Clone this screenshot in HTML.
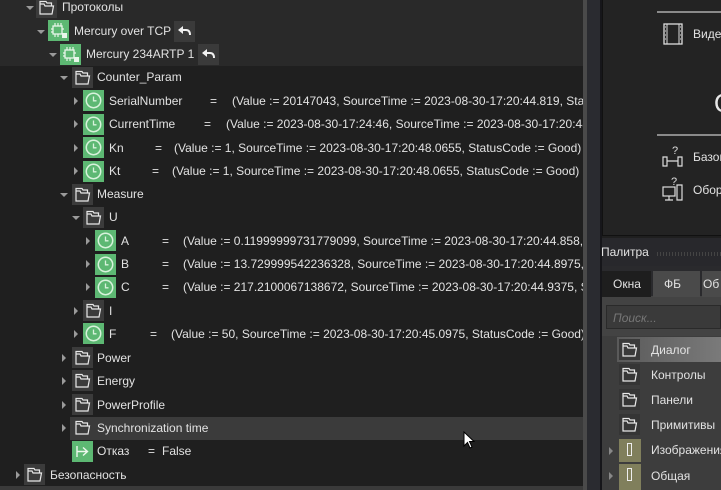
<!DOCTYPE html>
<html><head><meta charset="utf-8">
<style>
*{margin:0;padding:0;box-sizing:border-box}
body{width:721px;height:490px;overflow:hidden;background:#1f1f1f;font-family:"Liberation Sans","Noto Sans CJK SC",sans-serif;font-size:12px;color:#e2e2e2;position:relative}
.a{position:absolute;white-space:nowrap}
.t{position:absolute;white-space:nowrap;line-height:14px}
.arr{position:absolute;width:0;height:0}
.ar{border-top:4px solid transparent;border-bottom:4px solid transparent;border-left:4px solid #9a9a9a}
.ad{border-left:4px solid transparent;border-right:4px solid transparent;border-top:4px solid #9a9a9a}
.ic{position:absolute;width:21px;height:21px}
.fo{background:#3b3b3b}
.gr{background:#5db873}
#left{position:absolute;left:0;top:0;width:583px;height:490px;overflow:hidden;background:#1f1f1f}
</style></head><body>
<svg width="0" height="0" style="position:absolute">
<defs>
<symbol id="fold" viewBox="0 0 21 21"><path d="M4 7 V17 H16 L17.5 9 H9 L8 7 Z M4 7 V4.5 H10 L11 6 H15.5 V9" fill="none" stroke="#e8e8e8" stroke-width="1.2"/></symbol>
<symbol id="clk" viewBox="0 0 21 21"><circle cx="10.5" cy="10.5" r="7.2" fill="none" stroke="#d8f2dc" stroke-width="1.5"/><path d="M10.5 6.5 V10.8 H13.5" fill="none" stroke="#d8f2dc" stroke-width="1.3"/></symbol>
<symbol id="chip" viewBox="0 0 21 21"><rect x="5" y="6" width="9" height="8" fill="none" stroke="#e8f6ea" stroke-width="1.3"/><path d="M7 3V6M10 3V6M13 3V6M7 14V17M10 14V17M3 9H5M3 12H5M14 9H16" stroke="#e8f6ea" stroke-width="1.2"/><rect x="14" y="13" width="5" height="5" fill="#e8f6ea"/></symbol>
<symbol id="undo" viewBox="0 0 21 21"><path d="M5 9 H12 C15 9 16 11 16 14" fill="none" stroke="#f0f0f0" stroke-width="2"/><path d="M4 9 L9 5 V13 Z" fill="#f0f0f0"/></symbol>
</defs></svg>

<div id="left">
<div class="a" style="left:0;top:0;width:583px;height:66px;background:#292929"></div>
<div class="a" style="left:70px;top:417px;width:513px;height:23px;background:#3b3b3b"></div>

<div class="arr ad" style="left:26px;top:6px"></div>
<svg class="ic fo" width="21" height="21" style="left:36px;top:-3px"><use href="#fold" width="21" height="21"/></svg>
<div class="t" style="left:62px;top:0">Протоколы</div>

<div class="arr ad" style="left:37px;top:30px"></div>
<svg class="ic gr" width="21" height="21" style="left:48px;top:20px"><use href="#chip" width="21" height="21"/></svg>
<div class="t" style="left:74px;top:24px">Mercury over TCP</div>
<svg class="ic" width="21" height="21" style="left:174px;top:21px;background:#3a3a3a"><use href="#undo" width="21" height="21"/></svg>

<div class="arr ad" style="left:49px;top:53px"></div>
<svg class="ic gr" width="21" height="21" style="left:60px;top:44px"><use href="#chip" width="21" height="21"/></svg>
<div class="t" style="left:86px;top:47px">Mercury 234ARTP 1</div>
<svg class="ic" width="21" height="21" style="left:198px;top:44px;background:#3a3a3a"><use href="#undo" width="21" height="21"/></svg>

<div class="arr ad" style="left:60px;top:76px"></div>
<svg class="ic fo" width="21" height="21" style="left:72px;top:67px"><use href="#fold" width="21" height="21"/></svg>
<div class="t" style="left:97px;top:70px">Counter_Param</div>

<div class="arr ar" style="left:74px;top:97px"></div>
<svg class="ic gr" width="21" height="21" style="left:83px;top:90px"><use href="#clk" width="21" height="21"/></svg>
<div class="t" style="left:109px;top:94px">SerialNumber</div>
<div class="t" style="left:210px;top:94px">=</div>
<div class="t" style="left:232px;top:94px">(Value := 20147043, SourceTime := 2023-08-30-17:20:44.819, StatusCode := Good)</div>

<div class="arr ar" style="left:74px;top:120px"></div>
<svg class="ic gr" width="21" height="21" style="left:83px;top:114px"><use href="#clk" width="21" height="21"/></svg>
<div class="t" style="left:109px;top:117px">CurrentTime</div>
<div class="t" style="left:204px;top:117px">=</div>
<div class="t" style="left:226px;top:117px">(Value := 2023-08-30-17:24:46, SourceTime := 2023-08-30-17:20:48.0305, StatusCode := Good)</div>

<div class="arr ar" style="left:74px;top:144px"></div>
<svg class="ic gr" width="21" height="21" style="left:83px;top:137px"><use href="#clk" width="21" height="21"/></svg>
<div class="t" style="left:109px;top:141px">Kn</div>
<div class="t" style="left:155px;top:141px">=</div>
<div class="t" style="left:174px;top:141px">(Value := 1, SourceTime := 2023-08-30-17:20:48.0655, StatusCode := Good)</div>

<div class="arr ar" style="left:74px;top:167px"></div>
<svg class="ic gr" width="21" height="21" style="left:83px;top:161px"><use href="#clk" width="21" height="21"/></svg>
<div class="t" style="left:109px;top:164px">Kt</div>
<div class="t" style="left:152px;top:164px">=</div>
<div class="t" style="left:172px;top:164px">(Value := 1, SourceTime := 2023-08-30-17:20:48.0655, StatusCode := Good)</div>

<div class="arr ad" style="left:60px;top:193px"></div>
<svg class="ic fo" width="21" height="21" style="left:72px;top:184px"><use href="#fold" width="21" height="21"/></svg>
<div class="t" style="left:97px;top:187px">Measure</div>

<div class="arr ad" style="left:72px;top:216px"></div>
<svg class="ic fo" width="21" height="21" style="left:83px;top:207px"><use href="#fold" width="21" height="21"/></svg>
<div class="t" style="left:109px;top:210px">U</div>

<div class="arr ar" style="left:86px;top:237px"></div>
<svg class="ic gr" width="21" height="21" style="left:95px;top:230px"><use href="#clk" width="21" height="21"/></svg>
<div class="t" style="left:121px;top:234px">A</div>
<div class="t" style="left:162px;top:234px">=</div>
<div class="t" style="left:183px;top:234px">(Value := 0.11999999731779099, SourceTime := 2023-08-30-17:20:44.858, StatusCode := Good)</div>

<div class="arr ar" style="left:86px;top:260px"></div>
<svg class="ic gr" width="21" height="21" style="left:95px;top:254px"><use href="#clk" width="21" height="21"/></svg>
<div class="t" style="left:121px;top:257px">B</div>
<div class="t" style="left:162px;top:257px">=</div>
<div class="t" style="left:183px;top:257px">(Value := 13.729999542236328, SourceTime := 2023-08-30-17:20:44.8975, StatusCode := Good)</div>

<div class="arr ar" style="left:86px;top:283px"></div>
<svg class="ic gr" width="21" height="21" style="left:95px;top:277px"><use href="#clk" width="21" height="21"/></svg>
<div class="t" style="left:121px;top:280px">C</div>
<div class="t" style="left:162px;top:280px">=</div>
<div class="t" style="left:183px;top:280px">(Value := 217.2100067138672, SourceTime := 2023-08-30-17:20:44.9375, StatusCode := Good)</div>

<div class="arr ar" style="left:74px;top:307px"></div>
<svg class="ic fo" width="21" height="21" style="left:83px;top:300px"><use href="#fold" width="21" height="21"/></svg>
<div class="t" style="left:109px;top:304px">I</div>

<div class="arr ar" style="left:74px;top:330px"></div>
<svg class="ic gr" width="21" height="21" style="left:83px;top:323px"><use href="#clk" width="21" height="21"/></svg>
<div class="t" style="left:109px;top:327px">F</div>
<div class="t" style="left:150px;top:327px">=</div>
<div class="t" style="left:171px;top:327px">(Value := 50, SourceTime := 2023-08-30-17:20:45.0975, StatusCode := Good)</div>

<div class="arr ar" style="left:62px;top:354px"></div>
<svg class="ic fo" width="21" height="21" style="left:72px;top:347px"><use href="#fold" width="21" height="21"/></svg>
<div class="t" style="left:97px;top:351px">Power</div>
<div class="arr ar" style="left:62px;top:377px"></div>
<svg class="ic fo" width="21" height="21" style="left:72px;top:370px"><use href="#fold" width="21" height="21"/></svg>
<div class="t" style="left:97px;top:374px">Energy</div>
<div class="arr ar" style="left:62px;top:401px"></div>
<svg class="ic fo" width="21" height="21" style="left:72px;top:394px"><use href="#fold" width="21" height="21"/></svg>
<div class="t" style="left:97px;top:398px">PowerProfile</div>
<div class="arr ar" style="left:62px;top:424px"></div>
<svg class="ic fo" width="21" height="21" style="left:72px;top:417px"><use href="#fold" width="21" height="21"/></svg>
<div class="t" style="left:97px;top:421px">Synchronization time</div>

<svg class="ic gr" width="21" height="21" style="left:72px;top:441px" viewBox="0 0 21 21"><path d="M5 5 V16 M5 10.5 H15 M11 6.5 L15.5 10.5 L11 14.5" fill="none" stroke="#eef8ee" stroke-width="1.4"/></svg>
<div class="t" style="left:97px;top:444px">Отказ</div>
<div class="t" style="left:148px;top:444px">=</div>
<div class="t" style="left:162px;top:444px">False</div>

<div class="arr ar" style="left:16px;top:471px"></div>
<svg class="ic fo" width="21" height="21" style="left:24px;top:464px"><use href="#fold" width="21" height="21"/></svg>
<div class="t" style="left:50px;top:468px">Безопасность</div>
<div class="a" style="left:0;top:486px;width:583px;height:4px;background:#3a3a3a"></div>
<svg class="a" style="left:463px;top:431px" width="12" height="19" viewBox="0 0 12 19"><path d="M1 1 V15 L4.5 11.5 L7 17 L9 16 L6.5 10.5 H11 Z" fill="#fff" stroke="#000" stroke-width="1"/></svg>
</div>

<div class="a" style="left:583px;top:0;width:4px;height:490px;background:#4a4a4a"></div>
<div class="a" style="left:587px;top:0;width:14px;height:490px;background:#2a2b30"></div>
<div class="a" style="left:600px;top:0;width:2px;height:490px;background:#16161a"></div>

<!-- right top panel -->
<div class="a" style="left:602px;top:0;width:119px;height:236px;background:#232323;border-left:1px solid #111;border-bottom:1px solid #111"></div>
<div class="a" style="left:657px;top:11px;width:64px;height:2px;background:#8a8a8a"></div>
<div class="a" style="left:657px;top:134px;width:64px;height:2px;background:#8a8a8a"></div>
<svg class="a" style="left:663px;top:23px" width="20" height="22" viewBox="0 0 20 22"><rect x="1" y="1" width="18" height="20" fill="none" stroke="#ddd" stroke-width="1.3"/><path d="M4 1V21M16 1V21" stroke="#ddd"/><path d="M2 4H3M2 8H3M2 12H3M2 16H3M17 4H18M17 8H18M17 12H18M17 16H18" stroke="#ddd"/></svg>
<div class="t" style="left:693px;top:27px">Видео</div>
<div class="a" style="left:714px;top:90px;font-size:26px;color:#e8e8e8;line-height:26px">O</div>
<svg class="a" style="left:662px;top:147px" width="22" height="20" viewBox="0 0 22 20"><path d="M1 10H5V19H1ZM16 10H20V19H16ZM5 14H16" fill="none" stroke="#ddd" stroke-width="1.2"/></svg>
<div class="t" style="left:672px;top:144px;color:#ddd;font-size:11px">?</div>
<div class="t" style="left:693px;top:150px">Базов</div>
<svg class="a" style="left:662px;top:180px" width="22" height="22" viewBox="0 0 22 22"><rect x="1" y="7" width="12" height="9" fill="none" stroke="#ddd" stroke-width="1.2"/><path d="M7 16V20M3 20H11M15 5H20V20H15Z" fill="none" stroke="#ddd" stroke-width="1.2"/></svg>
<div class="t" style="left:671px;top:175px;color:#ddd;font-size:11px">?</div>
<div class="t" style="left:693px;top:183px">Обор</div>

<!-- palette -->
<div class="a" style="left:602px;top:238px;width:119px;height:28px;background:#28282c"></div>
<div class="t" style="left:601px;top:245px">Палитра</div>
<div class="a" style="left:657px;top:252px;width:64px;height:4px;background:repeating-linear-gradient(90deg,#444 0 1px,transparent 1px 3px)"></div>
<div class="a" style="left:602px;top:266px;width:119px;height:224px;background:#2a2a2d"></div>
<div class="a" style="left:602px;top:296px;width:119px;height:194px;background:#434343"></div>
<div class="a" style="left:602px;top:271px;width:49px;height:26px;background:#1e1e1e"></div>
<div class="t" style="left:613px;top:277px">Окна</div>
<div class="a" style="left:653px;top:271px;width:47px;height:26px;background:#4a4a4a"></div>
<div class="t" style="left:664px;top:277px">ФБ</div>
<div class="a" style="left:702px;top:271px;width:19px;height:26px;background:#4a4a4a"></div>
<div class="t" style="left:703px;top:277px">Об</div>
<div class="a" style="left:606px;top:305px;width:115px;height:24px;background:#3a3a3a;border:1px solid #2a2a2a"></div>
<div class="t" style="left:613px;top:311px;color:#777;font-style:italic">Поиск...</div>
<div class="a" style="left:602px;top:336px;width:119px;height:154px;background:#3d3d3d"></div>
<div class="a" style="left:617px;top:337px;width:104px;height:25px;background:linear-gradient(90deg,#5a5a5a,#7a7a7a)"></div>
<svg class="ic" width="21" height="21" style="left:619px;top:339px;background:#3a3a3a"><use href="#fold" width="21" height="21"/></svg>
<div class="t" style="left:651px;top:343px">Диалог</div>
<svg class="ic" width="21" height="21" style="left:619px;top:364px;background:#353535"><use href="#fold" width="21" height="21"/></svg>
<div class="t" style="left:651px;top:368px">Контролы</div>
<svg class="ic" width="21" height="21" style="left:619px;top:389px;background:#353535"><use href="#fold" width="21" height="21"/></svg>
<div class="t" style="left:651px;top:393px">Панели</div>
<svg class="ic" width="21" height="21" style="left:619px;top:414px;background:#353535"><use href="#fold" width="21" height="21"/></svg>
<div class="t" style="left:651px;top:418px">Примитивы</div>
<div class="arr" style="left:609px;top:447px;border-top:4px solid transparent;border-bottom:4px solid transparent;border-left:4px solid #888"></div>
<div class="a" style="left:619px;top:439px;width:22px;height:23px;background:#807f5c"></div>
<div class="a" style="left:627px;top:443px;width:5px;height:13px;border:1px solid #eee"></div>
<div class="t" style="left:651px;top:443px">Изображения</div>
<div class="arr" style="left:609px;top:472px;border-top:4px solid transparent;border-bottom:4px solid transparent;border-left:4px solid #888"></div>
<div class="a" style="left:619px;top:464px;width:22px;height:26px;background:#807f5c"></div>
<div class="a" style="left:627px;top:468px;width:5px;height:13px;border:1px solid #eee"></div>
<div class="t" style="left:651px;top:469px">Общая</div>
</body></html>
